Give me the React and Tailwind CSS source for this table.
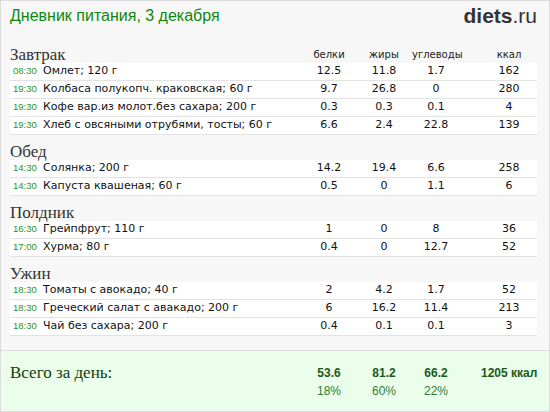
import React from "react";

const sections = [
  {
    title: "Завтрак",
    head: true,
    rows: [
      ["08:30", "Омлет; 120 г", "12.5", "11.8", "1.7", "162"],
      ["19:30", "Колбаса полукопч. краковская; 60 г", "9.7", "26.8", "0", "280"],
      ["19:30", "Кофе вар.из молот.без сахара; 200 г", "0.3", "0.3", "0.1", "4"],
      ["19:30", "Хлеб с овсяными отрубями, тосты; 60 г", "6.6", "2.4", "22.8", "139"],
    ],
  },
  {
    title: "Обед",
    rows: [
      ["14:30", "Солянка; 200 г", "14.2", "19.4", "6.6", "258"],
      ["14:30", "Капуста квашеная; 60 г", "0.5", "0", "1.1", "6"],
    ],
  },
  {
    title: "Полдник",
    rows: [
      ["16:30", "Грейпфрут; 110 г", "1", "0", "8", "36"],
      ["17:00", "Хурма; 80 г", "0.4", "0", "12.7", "52"],
    ],
  },
  {
    title: "Ужин",
    rows: [
      ["18:30", "Томаты с авокадо; 40 г", "2", "4.2", "1.7", "52"],
      ["18:30", "Греческий салат с авакадо; 200 г", "6", "16.2", "11.4", "213"],
      ["18:30", "Чай без сахара; 200 г", "0.4", "0.1", "0.1", "3"],
    ],
  },
];

const grid = "grid grid-cols-[1fr_54px_56px_48px_77px]";

export default function App() {
  return (
    <div className="w-[550px] h-[412px] border border-[#dcdcdc] bg-[#f7f7f7] flex flex-col overflow-hidden">
      <div className="h-[37px] shrink-0 flex justify-between items-start pl-[9px] pr-[12px]">
        <div className="pt-[5px] text-[16px] leading-[20px] text-[#0f870f] font-['Liberation_Sans',sans-serif]">
          Дневник питания, 3 декабря
        </div>
        <div className="pt-[3px] text-[21px] leading-[24px] text-[#333] font-['Liberation_Sans',sans-serif]">
          <span className="font-bold">diets</span>
          <span>.ru</span>
        </div>
      </div>
      <div className="pl-[9px] pr-[12px] flex flex-col">
        {sections.map((s) => (
          <div key={s.title}>
            <div className={`${grid} h-[25px] items-end`}>
              <div className="leading-[16px] text-[17px] text-[#333] font-['Liberation_Serif',serif]">
                {s.title}
              </div>
              {s.head &&
                ["белки", "жиры", "углеводы"].map((h) => (
                  <div key={h} className="text-center leading-[16px] text-[10px] text-[#222] font-['DejaVu_Sans',sans-serif]">
                    {h}
                  </div>
                ))}
              {s.head && (
                <div className="pl-[21px] text-center leading-[16px] text-[10px] text-[#222] font-['DejaVu_Sans',sans-serif]">
                  ккал
                </div>
              )}
            </div>
            {s.rows.map((r, i) => (
              <div
                key={i}
                className={`${grid} h-[18px] items-center bg-white border-b border-[#e3e3e3] font-['DejaVu_Sans',sans-serif] text-[11px] text-[#111]`}
              >
                <div className="flex items-center">
                  <span className="w-[33px] pl-[3px] text-[9.5px] text-[#1f951f] font-['Liberation_Sans',sans-serif]">
                    {r[0]}
                  </span>
                  <span className="whitespace-nowrap">{r[1]}</span>
                </div>
                <div className="text-center">{r[2]}</div>
                <div className="text-center">{r[3]}</div>
                <div className="text-center">{r[4]}</div>
                <div className="pl-[21px] text-center">{r[5]}</div>
              </div>
            ))}
          </div>
        ))}
      </div>
      <div className="flex-1" />
      <div className="h-[61px] shrink-0 border-t border-[#dcdcdc] bg-[#ebfdeb] pl-[9px] pr-[12px] pt-[13px]">
        <div className={`${grid} leading-[18px]`}>
          <div className="row-span-2 text-[17px] text-[#0d3f0d] font-['Liberation_Serif',serif]">
            Всего за день:
          </div>
          <div className="text-center text-[12px] font-bold text-[#1b5a1b] font-['Liberation_Sans',sans-serif]">53.6</div>
          <div className="text-center text-[12px] font-bold text-[#1b5a1b] font-['Liberation_Sans',sans-serif]">81.2</div>
          <div className="text-center text-[12px] font-bold text-[#1b5a1b] font-['Liberation_Sans',sans-serif]">66.2</div>
          <div className="pl-[21px] text-center whitespace-nowrap text-[12px] font-bold text-[#1b5a1b] font-['Liberation_Sans',sans-serif]">1205 ккал</div>
          <div className="text-center text-[12px] text-[#2f7d2f] font-['Liberation_Sans',sans-serif]">18%</div>
          <div className="text-center text-[12px] text-[#2f7d2f] font-['Liberation_Sans',sans-serif]">60%</div>
          <div className="text-center text-[12px] text-[#2f7d2f] font-['Liberation_Sans',sans-serif]">22%</div>
          <div />
        </div>
      </div>
    </div>
  );
}
